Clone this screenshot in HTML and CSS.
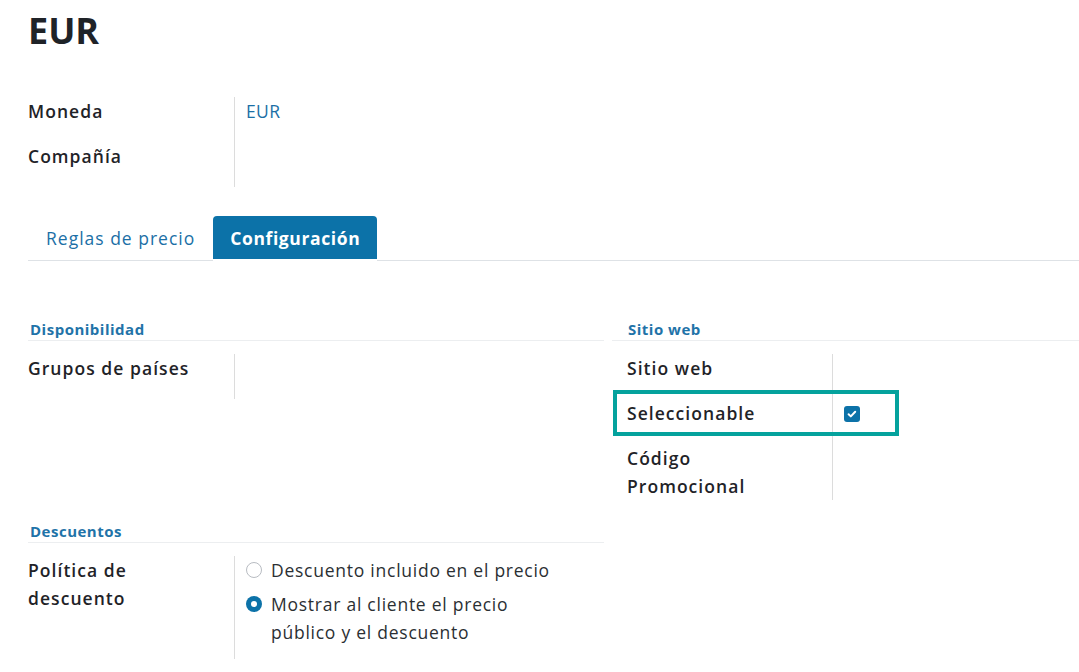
FILE: index.html
```html
<!DOCTYPE html>
<html lang="es">
<head>
<meta charset="utf-8">
<title>EUR</title>
<link rel="stylesheet" href="styles.css">
</head>
<body>
<div class="sheet">
  <h1 class="title">EUR</h1>

  <div class="group top-group">
    <div class="row"><div class="label">Moneda</div><div class="value"><span class="link">EUR</span></div></div>
    <div class="row"><div class="label">Compañía</div><div class="value"></div></div>
  </div>

  <div class="tabs">
    <div class="tab">Reglas de precio</div>
    <div class="tab active">Configuración</div>
  </div>

  <div class="config">
    <div class="col left">
      <div class="section-head">Disponibilidad</div>
      <div class="group">
        <div class="row"><div class="label">Grupos de países</div><div class="value"></div></div>
      </div>
    </div>
    <div class="col right">
      <div class="section-head">Sitio web</div>
      <div class="group rgroup">
        <div class="row"><div class="label">Sitio web</div><div class="value"></div></div>
        <div class="row highlighted"><div class="label">Seleccionable</div><div class="value"><span class="checkbox"><svg viewBox="0 0 16 16" width="16" height="16"><path d="M4.6 8.3l2.2 2.1 4.4-4.6" fill="none" stroke="#fff" stroke-width="2" stroke-linecap="round" stroke-linejoin="round"/></svg></span></div><span class="hl-box"></span></div>
        <div class="row last"><div class="label">Código<br>Promocional</div><div class="value"></div></div>
      </div>
    </div>
    <div class="col left">
      <div class="section-head">Descuentos</div>
      <div class="group">
        <div class="row disc"><div class="label">Política de<br>descuento</div>
          <div class="value radios">
            <div class="radio-item"><span class="radio"></span><span>Descuento incluido en el precio</span></div>
            <div class="radio-item"><span class="radio checked"></span><span>Mostrar al cliente el precio<br>público y el descuento</span></div>
          </div>
        </div>
      </div>
    </div>
  </div>
</div>
</body>
</html>
```

FILE: styles.css
```css
* { box-sizing: border-box; }
html, body { margin: 0; padding: 0; background: #fff; }
body {
  font-family: "Open Sans", "DejaVu Sans", sans-serif;
  color: #212529;
  font-size: 17.5px;
  letter-spacing: 0.75px;
  overflow: hidden;
}
.sheet { padding: 8px 0 0 28px; width: 1079px; }
.title {
  margin: 0;
  font-size: 36px;
  font-weight: 700;
  line-height: 46px;
  color: #1f2328;
  letter-spacing: 0;
}
.group { display: flex; flex-direction: column; }
.row { display: grid; grid-template-columns: 206px 1fr; position: relative; }
.label {
  font-weight: 600;
  line-height: 28px;
  padding-bottom: 17px;
  padding-left: 0;
  color: #1f2328;
  letter-spacing: 1.05px;
}
.value {
  border-left: 1px solid #dcdcdc;
  padding-left: 11px;
  line-height: 28px;
  padding-bottom: 17px;
}
.top-group { margin-top: 43px; width: 576px; }
.link { color: #1b6fa6; letter-spacing: 0.4px; }

.tabs {
  display: flex;
  border-bottom: 1px solid #dee2e6;
  margin-top: 29px;
  width: 1051px;
}
.tab {
  height: 44px;
  line-height: 44px;
  padding: 0 18px;
  color: #1b6fa6;
  margin-bottom: -1px;
  border-bottom: 2px solid transparent;
  letter-spacing: 1px;
}
.tab.active {
  background: #0c72a8;
  color: #fff;
  font-weight: 700;
  border-radius: 4px 4px 0 0;
  padding: 0 17px;
  height: 45px;
  border-bottom: 2px solid #fff;
  background-clip: padding-box;
  letter-spacing: 0.6px;
}

.config {
  display: grid;
  grid-template-columns: 576px 467px;
  column-gap: 8px;
  margin-top: 57px;
  row-gap: 20px;
  align-items: start;
}
.section-head {
  color: #1f73a8;
  font-weight: 700;
  font-size: 15px;
  line-height: 22px;
  padding-left: 2px;
  border-bottom: 1px solid #eceef0;
  margin-bottom: 13px;
  letter-spacing: 0.5px;
}
.right .section-head { padding-left: 16px; }
.right .row { grid-template-columns: 220px 1fr; }
.right .label { padding-left: 15px; }
.row.last .label, .row.last .value { padding-bottom: 0; }

.hl-box {
  position: absolute;
  left: 1px;
  top: -9px;
  width: 286px;
  height: 46px;
  border: 4px solid #04a29d;
  pointer-events: none;
}
.checkbox {
  display: inline-block;
  width: 16px;
  height: 16px;
  border-radius: 3px;
  background: #0c72a8;
  vertical-align: middle;
  position: relative;
  top: -1px;
}
.checkbox svg { display: block; }

.disc .value { padding-bottom: 13px; }
.radios { display: flex; flex-direction: column; gap: 6px; }
.radio-item { display: flex; align-items: flex-start; gap: 9px; line-height: 28px; color: #2b2f33; }
.radio {
  flex: none;
  width: 16px;
  height: 16px;
  border-radius: 50%;
  border: 1px solid #b8bcc2;
  margin-top: 6px;
  background: #fff;
}
.radio.checked {
  border: none;
  background: #0c72a8;
  position: relative;
}
.radio.checked::after {
  content: "";
  position: absolute;
  left: 5px; top: 5px;
  width: 6px; height: 6px;
  border-radius: 50%;
  background: #fff;
}
```
